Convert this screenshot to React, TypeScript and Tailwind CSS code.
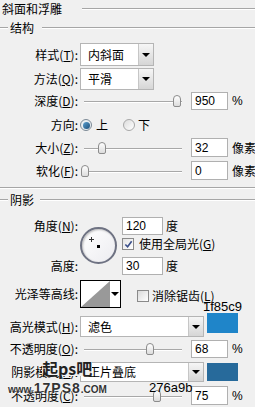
import type { ReactNode } from "react";

const cjk = '"Noto Sans CJK SC", "Liberation Sans", sans-serif';
const num = '"Liberation Sans", Arial, sans-serif';

function Etch({ className = "" }: { className?: string }) {
  return <div className={`h-0 border-t border-t-[#a6a6a6] border-b border-b-white ${className}`} />;
}

function Label({ children }: { children: ReactNode }) {
  return <div className="w-[78px] shrink-0 text-right whitespace-nowrap">{children}</div>;
}

function U({ children }: { children: ReactNode }) {
  return <span className="underline underline-offset-1">{children}</span>;
}

function Arrow() {
  return <div className="h-0 w-0 border-x-[4px] border-t-[4px] border-x-transparent border-t-black" />;
}

function Select({ text, width }: { text: string; width: string }) {
  return (
    <div className={`ml-[2px] flex h-full shrink-0 ${width} border border-[#b5b5b5] bg-white`}>
      <div className="flex flex-1 items-center pl-[7px]">{text}</div>
      <div className="flex w-[15px] items-center justify-center border-l border-[#c6c6c6] bg-gradient-to-b from-[#f6f6f6] to-[#d6d6d6]">
        <Arrow />
      </div>
    </div>
  );
}

function Slider({ thumb }: { thumb: string }) {
  return (
    <div className="relative ml-[2px] h-full w-[104px] shrink-0">
      <div className="absolute left-[4px] right-[2px] top-1/2 h-0 border-t border-t-[#a8a8a8] border-b border-b-white" />
      <div
        className={`absolute top-1/2 h-[12px] w-[8px] -translate-y-1/2 rounded-t-[4px] rounded-b-[2px] border border-[#8c8c8c] bg-gradient-to-b from-white to-[#dcdcdc] ${thumb}`}
      />
    </div>
  );
}

function Field({ value, className = "" }: { value: string; className?: string }) {
  return (
    <div
      className={`flex h-full shrink-0 items-center border border-[#b0b0b0] bg-white pl-[3px] text-[12px] ${className}`}
      style={{ fontFamily: num }}
    >
      {value}
    </div>
  );
}

function Check() {
  return (
    <div className="flex h-[12px] w-[12px] shrink-0 items-center justify-center border border-[#8a8a8a] bg-gradient-to-br from-[#e4e4e4] to-white">
      <svg viewBox="0 0 10 10" className="h-[9px] w-[9px]">
        <path d="M1.5 5 L4 7.5 L8.5 1.5" fill="none" stroke="#3a4f8a" strokeWidth="1.8" />
      </svg>
    </div>
  );
}

function Box() {
  return <div className="h-[12px] w-[12px] shrink-0 border border-[#8a8a8a] bg-gradient-to-br from-[#dadada] to-white" />;
}

export default function App() {
  return (
    <div
      className="relative h-[407px] w-[255px] overflow-hidden whitespace-nowrap bg-[#f0f0f0] text-[12px] leading-none text-black"
      style={{ fontFamily: cjk }}
    >
      <div className="flex h-[17px] items-center">
        <span className="pl-[2px]">斜面和浮雕</span>
        <Etch className="ml-[20px] flex-1" />
      </div>

      <div className="flex h-[22px] items-center">
        <Etch className="w-[8px]" />
        <span className="ml-[2px]">结构</span>
        <Etch className="ml-[8px] flex-1" />
      </div>

      <div className="mt-[4px] flex h-[23px] items-center">
        <Label>
          样式(<U>T</U>):
        </Label>
        <Select text="内斜面" width="w-[74px]" />
      </div>

      <div className="mt-[2px] flex h-[22px] items-center">
        <Label>
          方法(<U>Q</U>):
        </Label>
        <Select text="平滑" width="w-[74px]" />
      </div>

      <div className="mt-[2px] flex h-[18px] items-center">
        <Label>
          深度(<U>D</U>):
        </Label>
        <Slider thumb="left-[93px]" />
        <Field value="950" className="ml-[7px] w-[37px]" />
        <span className="ml-[4px] shrink-0" style={{ fontFamily: num }}>%</span>
      </div>

      <div className="mt-[5px] flex h-[20px] items-center">
        <Label>方向:</Label>
        <div className="ml-[2px] flex h-[12px] w-[12px] items-center justify-center rounded-full border border-[#7d8a96] bg-[#e8eef2]">
          <div className="h-[7px] w-[7px] rounded-full bg-gradient-to-br from-[#5aa0d0] to-[#1d4f7a]" />
        </div>
        <span className="ml-[4px]">上</span>
        <div className="ml-[15px] h-[12px] w-[12px] rounded-full border border-[#a8a8a8] bg-gradient-to-br from-[#dcdcdc] to-white" />
        <span className="ml-[3px]">下</span>
      </div>

      <div className="mt-[3px] flex h-[19px] items-center">
        <Label>
          大小(<U>Z</U>):
        </Label>
        <Slider thumb="left-[18px]" />
        <Field value="32" className="ml-[7px] w-[37px]" />
        <span className="ml-[4px] shrink-0">像素</span>
      </div>

      <div className="mt-[4px] flex h-[19px] items-center">
        <Label>
          软化(<U>F</U>):
        </Label>
        <Slider thumb="left-[1px]" />
        <Field value="0" className="ml-[7px] w-[37px]" />
        <span className="ml-[4px] shrink-0">像素</span>
      </div>

      <Etch className="mt-[7px]" />

      <div className="mt-[1px] flex h-[20px] items-center">
        <Etch className="w-[8px]" />
        <span className="ml-[2px]">阴影</span>
        <Etch className="ml-[6px] flex-1" />
      </div>

      <div className="flex h-[65px]">
        <div className="flex w-[78px] shrink-0 flex-col">
          <div className="mt-[7px] flex h-[18px] items-center justify-end">
            角度(<U>N</U>):
          </div>
          <div className="mt-[22px] flex h-[18px] items-center justify-end">高度:</div>
        </div>
        <div className="relative ml-[2px] mt-[17px] h-[37px] w-[37px] shrink-0 rounded-full border-2 border-[#6e7282] bg-gradient-to-br from-white to-[#ececf0] shadow-[inset_1px_1px_2px_rgba(0,0,0,0.25)]">
          <div className="absolute left-[9px] top-[8px] h-[5px] w-px bg-[#333]" />
          <div className="absolute left-[7px] top-[10px] h-px w-[5px] bg-[#333]" />
          <div className="absolute left-[15px] top-[16px] h-[3px] w-[3px] bg-black" />
        </div>
        <div className="ml-[5px] flex flex-col">
          <div className="mt-[7px] flex h-[18px] items-center">
            <Field value="120" className="w-[41px]" />
            <span className="ml-[3px]">度</span>
          </div>
          <div className="mt-[2px] flex h-[14px] items-center">
            <Check />
            <span className="ml-[5px]">
              使用全局光(<U>G</U>)
            </span>
          </div>
          <div className="mt-[6px] flex h-[18px] items-center">
            <Field value="30" className="w-[41px]" />
            <span className="ml-[3px]">度</span>
          </div>
        </div>
      </div>

      <div className="mt-[5px] flex h-[28px] items-center">
        <Label>光泽等高线:</Label>
        <div className="ml-[2px] flex h-full w-[41px] shrink-0 border border-black bg-white">
          <svg viewBox="0 0 29 26" preserveAspectRatio="none" className="h-full w-[29px]">
            <polygon points="0,26 29,0 29,26" fill="#999999" />
          </svg>
          <div className="flex flex-1 items-center justify-center">
            <Arrow />
          </div>
        </div>
        <div className="ml-[16px] mt-[4px] flex items-center">
          <Box />
          <span className="ml-[3px]">
            消除锯齿(<U>L</U>)
          </span>
        </div>
      </div>

      <div className="mt-[8px] flex h-[21px] items-start">
        <div className="flex h-full items-center">
          <Label>
            高光模式(<U>H</U>):
          </Label>
          <Select text="滤色" width="w-[124px]" />
        </div>
        <div className="ml-[3px] mt-[-3px] h-[20px] w-[31px] shrink-0 bg-[#1f85c9]" />
      </div>

      <div className="mt-[3px] flex h-[18px] items-center">
        <Label>
          不透明度(<U>O</U>):
        </Label>
        <Slider thumb="left-[66px]" />
        <Field value="68" className="ml-[7px] w-[37px]" />
        <span className="ml-[4px] shrink-0" style={{ fontFamily: num }}>%</span>
      </div>

      <div className="mt-[4px] flex h-[20px] items-center">
        <Label>
          阴影模式(<U>A</U>):
        </Label>
        <Select text="正片叠底" width="w-[124px]" />
        <div className="ml-[3px] h-[18px] w-[31px] shrink-0 bg-[#276a9b]" />
      </div>

      <div className="mt-[4px] flex h-[19px] items-center">
        <Label>
          不透明度(<U>C</U>):
        </Label>
        <Slider thumb="left-[73px]" />
        <Field value="75" className="ml-[7px] w-[37px]" />
        <span className="ml-[4px] shrink-0" style={{ fontFamily: num }}>%</span>
      </div>

      <div className="absolute left-[203px] top-[300px] text-[13px]" style={{ fontFamily: num }}>
        1f85c9
      </div>
      <div className="absolute left-[149px] top-[381px] text-[13px]" style={{ fontFamily: num }}>
        276a9b
      </div>

      <div className="absolute left-[42px] top-[360px] bg-[#f0f0f0] text-[16px] font-bold text-[#222]">
        起ps吧
      </div>
      <div
        className="absolute left-[8px] top-[381px] flex items-end font-black text-[#333] [text-shadow:0_0_2px_#fff,0_0_1px_#fff]"
        style={{ fontFamily: num }}
      >
        <span className="text-[10px]">www.</span>
        <span className="text-[14px] tracking-[1px]">17PS8</span>
        <span className="text-[10px]">.COM</span>
      </div>
    </div>
  );
}
